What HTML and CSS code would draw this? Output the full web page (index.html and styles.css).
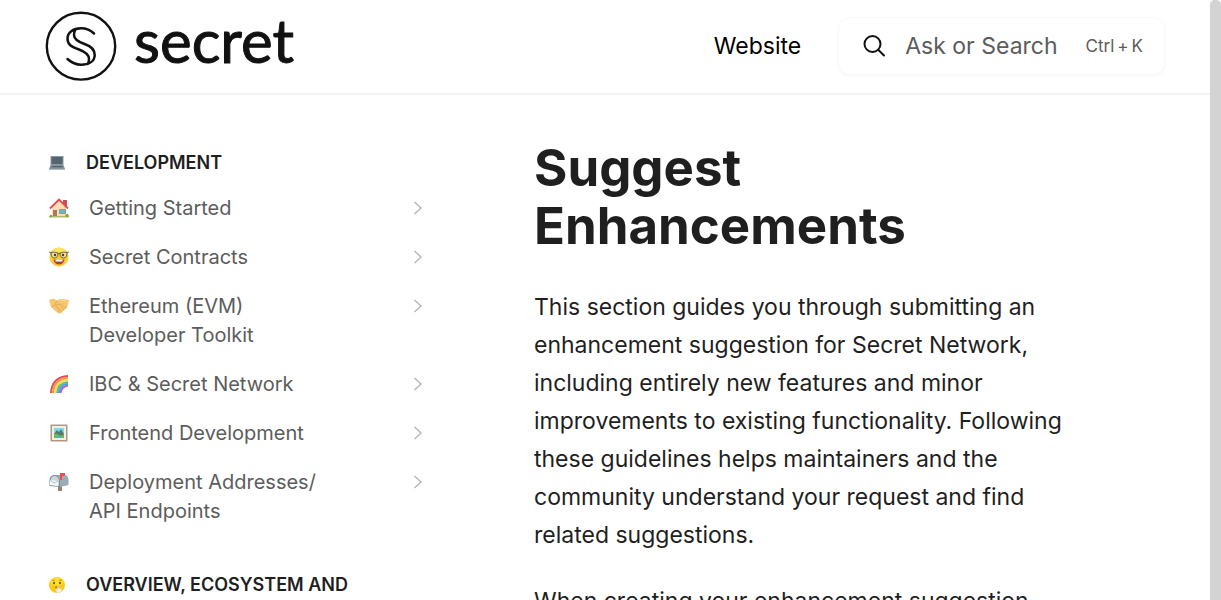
FILE: index.html
```html
<!DOCTYPE html>
<html lang="en">
<head>
<meta charset="utf-8">
<meta name="viewport" content="width=device-width, initial-scale=1">
<title>Suggest Enhancements</title>
<link rel="stylesheet" href="styles.css">
</head>
<body>
<div class="page">
  <header class="header">
    <a class="brand" href="#">
      <svg class="brand-mark" viewBox="0 0 72 72" fill="none" stroke="#111" stroke-linecap="round" aria-hidden="true">
        <ellipse cx="36" cy="36.200" rx="34.200" ry="33.400" stroke-width="2.400"/>
        <path d="M49 23.500C45 19.500 41 18.300 36 18.300C28 18.300 22.500 23 22.500 28.500C22.500 35 27 37 34 39.500C40 41.700 44 44 44 49C44 51.500 43.500 53 42.500 54" stroke-width="2.500"/>
        <path d="M22.500 49C27 53 31 54.700 36 54.700C44.500 54.700 49.700 51 49.700 45C49.700 39 45.500 36 39.500 34C33.500 32 29 29.500 29 25C29 22 29.500 20.500 30.500 19.500" stroke-width="2.500"/>
      </svg>
      <span class="brand-name">secret</span>
    </a>
    <nav class="top-nav"><a class="top-link" href="#">Website</a></nav>
    <button class="search" type="button">
      <svg class="search-icon" viewBox="0 0 24 24" fill="none" stroke="#111" stroke-width="2" stroke-linecap="round" aria-hidden="true"><circle cx="10.500" cy="10" r="8"/><path d="M16.200 15.700L22 21.500"/></svg>
      <span class="search-label">Ask or Search</span>
      <span class="search-keys"><span>Ctrl</span><span>+</span><span>K</span></span>
    </button>
  </header>
  <div class="body">
    <aside class="sidebar">
      <section class="group">
        <h2 class="group-title">
          <svg class="group-icon" viewBox="0 0 16 16" aria-hidden="true"><path d="M1.500 1h13v9h-13z" fill="#8a999f"/><path d="M2.500 2h11v7h-11z" fill="#526570"/><path d="M1.500 10h13l1.500 4H0z" fill="#84939c"/><path d="M3 11h10l.6 1.200H2.400z" fill="#50606a"/><path d="M0 14h16v1H0z" fill="#b4bdc2"/></svg>
          <span>Development</span>
        </h2>
        <ul class="links">
          <li><a class="link" href="#"><svg class="emoji" viewBox="0 0 20 20" aria-hidden="true"><path d="M14 2h4v7h-4z" fill="#c75050"/><path d="M3 9l7-7 7 7v10H3z" fill="#f6dfb7"/><path d="M1 10.500L10 1.500l9 9" fill="none" stroke="#ef4650" stroke-width="1.800"/><path d="M4 12h4v7H4z" fill="#a97961"/><path d="M10.500 11.500h6v4h-6z" fill="#58bbd3" stroke="#9b806b" stroke-width=".7"/><path d="M0 18h20v1.500H0z" fill="#b3b86a"/><circle cx="18" cy="17.500" r="1.700" fill="#7bad42"/><circle cx="2" cy="18" r="1.300" fill="#7bad42"/></svg><span class="link-text">Getting Started</span><svg class="chevron" viewBox="0 0 10 16" aria-hidden="true"><path d="M1.500 2L8 8l-6.500 6"/></svg></a></li>
          <li><a class="link" href="#"><svg class="emoji" viewBox="0 0 20 20" aria-hidden="true"><circle cx="10" cy="10" r="9.500" fill="#fbc934"/><path d="M2 5.500Q10-4 18 5.500z" fill="#fde55b"/><g fill="#f4df86" stroke="#5b5b4c" stroke-width=".9"><path d="M2 5.500Q5.500 4.500 9 6Q9 11 5.500 11T2 5.500zM11 6Q14.500 4.500 18 5.500Q18 11 14.500 11T11 6z"/><path d="M0 5l2 .5M18 5.500L20 5M9 6.500h2"/></g><circle cx="6" cy="8" r="1.200" fill="#4e3830"/><circle cx="14" cy="8" r="1.200" fill="#4e3830"/><path d="M4.500 12.500h11Q14.500 17.500 10 17.500T4.500 12.500z" fill="#af4432"/><path d="M6.500 12.500h7v2h-7z" fill="#fff"/></svg><span class="link-text">Secret Contracts</span><svg class="chevron" viewBox="0 0 10 16" aria-hidden="true"><path d="M1.500 2L8 8l-6.500 6"/></svg></a></li>
          <li><a class="link" href="#"><svg class="emoji" viewBox="0 0 20 20" aria-hidden="true"><path d="M0 4L4.500 2.500 8 4.500 11 3l5 .3L20 4l-1.800 7.500-6 5.500Q10 18.500 7.500 16L2 11z" fill="#f5c66d"/><path d="M8 4.500L6 8q1.500 2 4.500 0l6.500 4M3 11l2-2 2 1.500 2 1.500 1.500 2-1.500 2M12 11l3 3M10 13l2.500 2.500" fill="none" stroke="#d9a24a" stroke-width=".7"/><path d="M9 4l5 .3 3 1" fill="none" stroke="#ffdd92"/></svg><span class="link-text">Ethereum (EVM) Developer Toolkit</span><svg class="chevron" viewBox="0 0 10 16" aria-hidden="true"><path d="M1.500 2L8 8l-6.500 6"/></svg></a></li>
          <li><a class="link" href="#"><svg class="emoji" viewBox="0 0 20 20" fill="none" stroke-width="2" aria-hidden="true"><path d="M2 19Q3 3 19 2" stroke="#e34e55"/><path d="M4 19Q5 5 19 4" stroke="#f89845"/><path d="M6 19Q7 7 19 6" stroke="#f7dc52"/><path d="M8 19Q9 9 19 8" stroke="#6cbf77"/><path d="M9.800 19Q10.800 10.800 19 9.800" stroke="#45a7de"/><path d="M11.500 19Q12.500 12.500 19 11.500" stroke="#ad61d0"/></svg><span class="link-text">IBC &amp; Secret Network</span><svg class="chevron" viewBox="0 0 10 16" aria-hidden="true"><path d="M1.500 2L8 8l-6.500 6"/></svg></a></li>
          <li><a class="link" href="#"><svg class="emoji" viewBox="0 0 20 20" aria-hidden="true"><path d="M1.500 1.500h17v17h-17z" fill="#b49482"/><path d="M3 3h14v14H3z" fill="#f3efe8"/><path d="M5 5h10v10H5z" fill="#8bd4ed"/><path d="M5 11l3-4 2 2 2-3 3 5v3H5z" fill="#567b6a"/><path d="M5 11q3-1 5 1t5-1v4H5z" fill="#73b94c"/><path d="M8 15q0-3 3-3 0 1.500 2 3z" fill="#42b3dd"/></svg><span class="link-text">Frontend Development</span><svg class="chevron" viewBox="0 0 10 16" aria-hidden="true"><path d="M1.500 2L8 8l-6.500 6"/></svg></a></li>
          <li><a class="link" href="#"><svg class="emoji" viewBox="0 0 20 20" aria-hidden="true"><path d="M9 13h4v6H9z" fill="#a27c6b"/><path d="M5 3h10q4.500 0 4.500 5v5L11 15V8Q10 4 5 3z" fill="#9cacb5"/><path d="M.5 14V8Q1 3 5.500 3T11 8v7z" fill="#778e9b"/><path d="M1.500 13V8Q2 4 5.500 4T10 8v6z" fill="#cad4d9"/><path d="M1 8l8 1v5l-8-1z" fill="#f4f7f8"/><path d="M1 8l4 3 4-2" fill="none" stroke="#91a7b2" stroke-width=".7"/><path d="M11 8V1h5v3h-3v4z" fill="#ee4c54"/></svg><span class="link-text">Deployment Addresses/<wbr>API Endpoints</span><svg class="chevron" viewBox="0 0 10 16" aria-hidden="true"><path d="M1.500 2L8 8l-6.500 6"/></svg></a></li>
        </ul>
      </section>
      <section class="group">
        <h2 class="group-title">
          <svg class="group-icon" viewBox="0 0 16 16" aria-hidden="true"><circle cx="8" cy="8" r="8" fill="#ffc817"/><path d="M1.500 4Q8-3.500 14.500 4L13 8H3z" fill="#ffe12f"/><path d="M3.500 3.500l2-.6M10.500 2.900l2 .6" stroke="#7b5a21" stroke-width=".8"/><ellipse cx="5" cy="6" rx=".9" ry="1.300" fill="#5c432f"/><ellipse cx="11" cy="6" rx=".9" ry="1.300" fill="#5c432f"/><path d="M6 10.500q2-1 4 0" stroke="#8b5c1c" fill="none"/><path d="M8.500 8.500l1 .2.300 2.500 3 .5v2L11 16H8l-1.500-3 2-1z" fill="#f4efe3" stroke="#cbc3b4" stroke-width=".4"/></svg>
          <span>Overview, Ecosystem and</span>
        </h2>
      </section>
    </aside>
    <main class="content">
      <h1 class="title">Suggest Enhancements</h1>
      <p class="text">This section guides you through submitting an enhancement suggestion for Secret Network, including entirely new features and minor improvements to existing functionality. Following these guidelines helps maintainers and the community understand your request and find related suggestions.</p>
      <p class="text">When creating your enhancement suggestion,</p>
    </main>
  </div>
</div>
<div class="scroll-track" aria-hidden="true"><div class="scroll-thumb"></div></div>
</body>
</html>
```

FILE: styles.css
```css
* {
  box-sizing: border-box;
}

body {
  margin: 0;
  height: 100vh;
  display: flex;
  overflow: hidden;
  background: #fff;
  color: #1f1f1f;
  font-family: Inter, "Liberation Sans", sans-serif;
}

a {
  color: inherit;
  text-decoration: none;
}

.page {
  flex: 1;
  min-width: 0;
}

.header {
  display: flex;
  align-items: center;
  padding: 10px 45px 11px;
  border-bottom: 2px solid #f4f4f4;
}

.brand {
  display: flex;
  align-items: center;
  gap: 17px;
  margin-right: auto;
  color: #111;
}

.brand-mark {
  width: 72px;
  height: 72px;
}

.brand-name {
  padding-bottom: 12px;
  font-family: Lato, sans-serif;
  font-size: 60px;
  line-height: 60px;
  -webkit-text-stroke: 1px #111;
}

.top-link {
  color: #000;
  font-size: 23px;
  line-height: 32px;
}

.search {
  display: flex;
  align-items: center;
  height: 58px;
  margin-left: 37px;
  padding: 0 21px 0 23px;
  border: 1px solid #fafafa;
  border-radius: 12px;
  background: #fff;
  box-shadow: 0 1px 3px rgba(0, 0, 0, 0.04);
  color: #5c5c5c;
  font-family: inherit;
}

.search-icon {
  width: 24px;
  height: 24px;
  margin-right: 19px;
}

.search-label {
  font-size: 23px;
}

.search-keys {
  display: flex;
  gap: 3px;
  margin-left: 28px;
  font-size: 17px;
}

.body {
  display: grid;
  grid-template-columns: 384px minmax(0, 540px);
  column-gap: 101px;
  padding: 44px 50px 0 49px;
}

.sidebar {
  padding-top: 11px;
}

.group + .group {
  margin-top: 46px;
}

.group-title {
  display: flex;
  align-items: center;
  gap: 21px;
  margin: 0;
  font-size: 18px;
  font-weight: 600;
  line-height: 26px;
  text-transform: uppercase;
}

.group-icon {
  flex: none;
  width: 16px;
  height: 16px;
}

.links {
  display: grid;
  gap: 20px;
  margin: 18px 0 0;
  padding: 0;
  list-style: none;
}

.link {
  display: flex;
  align-items: flex-start;
  color: #5c5c5c;
  font-size: 20px;
  line-height: 29px;
}

.emoji {
  flex: none;
  width: 20px;
  height: 20px;
  margin: 4px 20px 0 0;
}

.link-text {
  width: 240px;
}

.chevron {
  width: 10px;
  height: 16px;
  margin: 6px 10px 0 auto;
  fill: none;
  stroke: #b8b8b8;
  stroke-width: 1.5;
}

.title {
  width: min-content;
  margin: 0 0 33px;
  font-size: 51px;
  font-weight: 700;
  line-height: 58px;
}

.text {
  margin: 0 0 28px;
  font-size: 23px;
  line-height: 38px;
}

.scroll-track {
  flex: none;
  width: 11px;
  background: #fafafa;
}

.scroll-thumb {
  height: 100%;
  border-radius: 5px 5px 0 0;
  background: #d3d3d3;
}
```
